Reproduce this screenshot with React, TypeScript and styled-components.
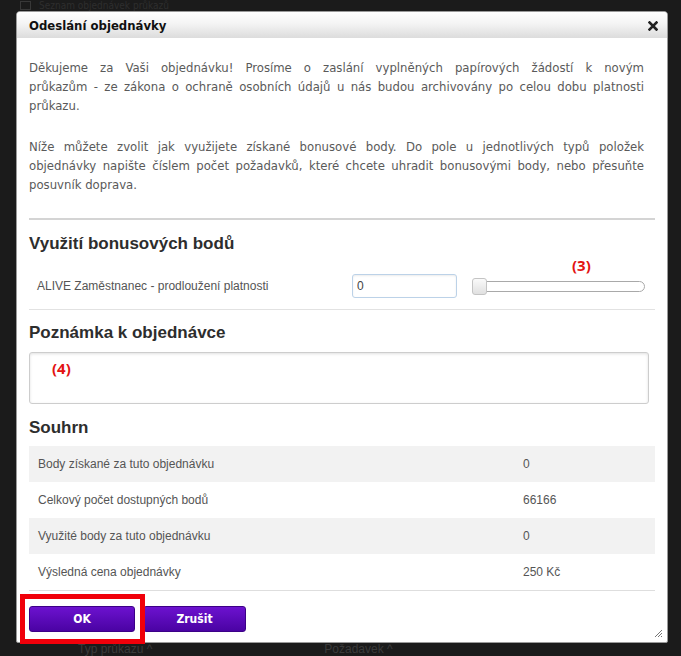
import React from 'react';
import styled, { createGlobalStyle } from 'styled-components';

const GlobalStyle = createGlobalStyle`
  html, body {
    margin: 0;
    padding: 0;
    background: #1b1b1b;
  }
  * {
    box-sizing: border-box;
  }
`;

type SummaryRow = { label: string; value: string };

const summary: SummaryRow[] = [
  { label: 'Body získané za tuto objednávku', value: '0' },
  { label: 'Celkový počet dostupných bodů', value: '66166' },
  { label: 'Využité body za tuto objednávku', value: '0' },
  { label: 'Výsledná cena objednávky', value: '250 Kč' },
];

// the intro text is laid out line by line, as the original dialog wraps it
const thanksLines = [
  'Děkujeme za Vaši objednávku! Prosíme o zaslání vyplněných papírových žádostí k novým',
  'průkazům - ze zákona o ochraně osobních údajů u nás budou archivovány po celou dobu platnosti',
  'průkazu.',
];

const bonusLines = [
  'Níže můžete zvolit jak využijete získané bonusové body. Do pole u jednotlivých typů položek',
  'objednávky napište číslem počet požadavků, které chcete uhradit bonusovými body, nebo přesuňte',
  'posuvník doprava.',
];

const CloseIcon = () => (
  <svg width="10" height="10" viewBox="0 0 10 10">
    <path d="M1.5 1.5 L8.5 8.5 M8.5 1.5 L1.5 8.5" stroke="#222" strokeWidth="2.6" strokeLinecap="square" />
  </svg>
);

const ResizeIcon = () => (
  <svg width="9" height="9" viewBox="0 0 9 9">
    <path d="M8 1 L1 8 M8 4 L4 8 M8 7 L7 8" stroke="#777" strokeWidth="1" />
  </svg>
);

const JustifiedText: React.FC<{ lines: string[]; spaced?: boolean }> = ({ lines, spaced }) => (
  <Paragraph spaced={spaced}>
    {lines.map((line, i) => (
      <Line key={line} last={i === lines.length - 1}>
        {line}
      </Line>
    ))}
  </Paragraph>
);

export default function App() {
  return (
    <>
      <GlobalStyle />
      <Page>
        <BackdropTop>
          <BackdropIcon />
          <BackdropText>Seznam objednávek průkazů</BackdropText>
        </BackdropTop>
        <BackdropBottom>
          <BackdropHeader offset={78}>Typ průkazu ^</BackdropHeader>
          <BackdropHeader offset={172}>Požadavek ^</BackdropHeader>
        </BackdropBottom>

        <Dialog>
          <Header>
            <Title>Odeslání objednávky</Title>
            <CloseButton aria-label="Zavřít">
              <CloseIcon />
            </CloseButton>
          </Header>
          <Body>
            <JustifiedText lines={thanksLines} />
            <JustifiedText lines={bonusLines} spaced />
            <Rule thick />
            <SectionTitle>Využití bonusových bodů</SectionTitle>
            <BonusRow>
              <BonusLabel>ALIVE Zaměstnanec - prodloužení platnosti</BonusLabel>
              <PointsInput defaultValue="0" />
              <SliderWrap>
                <Marker>(3)</Marker>
                <SliderTrack>
                  <SliderHandle />
                </SliderTrack>
              </SliderWrap>
            </BonusRow>
            <Rule />
            <SectionTitle top={13}>Poznámka k objednávce</SectionTitle>
            <NoteBox>
              <Marker inline>(4)</Marker>
            </NoteBox>
            <SectionTitle top={14}>Souhrn</SectionTitle>
            <SummaryTable>
              {summary.map((row, i) => (
                <SummaryLine key={row.label} striped={i % 2 === 0}>
                  <SummaryLabel>{row.label}</SummaryLabel>
                  <SummaryValue>{row.value}</SummaryValue>
                </SummaryLine>
              ))}
            </SummaryTable>
            <Footer>
              <PurpleButton width={106}>OK</PurpleButton>
              <PurpleButton width={103}>Zrušit</PurpleButton>
            </Footer>
          </Body>
          <Highlight />
          <ResizeGrip>
            <ResizeIcon />
          </ResizeGrip>
        </Dialog>
      </Page>
    </>
  );
}

const Page = styled.div`
  position: relative;
  width: 681px;
  height: 656px;
  overflow: hidden;
  background: #1b1b1b;
  display: flex;
  flex-direction: column;
  justify-content: space-between;
`;

const BackdropTop = styled.div`
  display: flex;
  align-items: center;
  gap: 8px;
  height: 11px;
  padding-left: 20px;
`;

const BackdropIcon = styled.div`
  width: 11px;
  height: 9px;
  border: 1px solid #383838;
`;

const BackdropText = styled.span`
  font-family: 'DejaVu Sans Condensed', 'DejaVu Sans', sans-serif;
  font-size: 10px;
  line-height: 11px;
  color: #2e2e2e;
`;

const BackdropBottom = styled.div`
  display: flex;
  align-items: flex-end;
  height: 13px;
`;

const BackdropHeader = styled.span<{ offset: number }>`
  margin-left: ${({ offset }) => offset}px;
  font-family: 'Liberation Sans', Arial, sans-serif;
  font-size: 12px;
  line-height: 13px;
  color: #3a3a3a;
  white-space: nowrap;
`;

const Dialog = styled.div`
  position: absolute;
  left: 16px;
  top: 11px;
  width: 652px;
  height: 632px;
  background: #fff;
  border: 1px solid #9a9a9a;
  border-radius: 4px 4px 2px 2px;
  display: flex;
  flex-direction: column;
`;

const Header = styled.div`
  height: 26px;
  display: flex;
  align-items: center;
  justify-content: space-between;
  padding: 0 9px 0 12px;
  background: linear-gradient(#ffffff 0%, #f4f4f4 45%, #dcdcdc 100%);
  border-radius: 3px 3px 0 0;
`;

const Title = styled.span`
  font-family: 'DejaVu Sans Condensed', 'DejaVu Sans', sans-serif;
  font-weight: bold;
  font-size: 13px;
  color: #111;
  padding-top: 1px;
`;

const CloseButton = styled.button`
  border: none;
  background: none;
  padding: 0;
  display: flex;
  margin-top: 1px;
  cursor: pointer;
`;

const Body = styled.div`
  padding: 20px 12px 0 12px;
  display: flex;
  flex-direction: column;
`;

const Paragraph = styled.p<{ spaced?: boolean }>`
  margin: ${({ spaced }) => (spaced ? '22px' : '0')} 11px 0 0;
  font-family: 'DejaVu Sans Condensed', 'DejaVu Sans', sans-serif;
  font-size: 13px;
  line-height: 19px;
  color: #5a5a5a;
`;

const Line = styled.span<{ last: boolean }>`
  display: block;
  white-space: nowrap;
  text-align: ${({ last }) => (last ? 'left' : 'justify')};
  text-align-last: ${({ last }) => (last ? 'left' : 'justify')};
`;

const Rule = styled.hr<{ thick?: boolean }>`
  margin: ${({ thick }) => (thick ? '24px 0 0' : '11px 0 0')};
  border: none;
  height: ${({ thick }) => (thick ? '2px' : '1px')};
  background: ${({ thick }) => (thick ? '#d4d4d4' : '#e2e2e2')};
`;

const SectionTitle = styled.h3<{ top?: number }>`
  margin: ${({ top }) => top ?? 14}px 0 0;
  font-family: 'Liberation Sans', Arial, sans-serif;
  font-weight: bold;
  font-size: 17px;
  line-height: 20px;
  color: #2d2d2d;
`;

const BonusRow = styled.div`
  margin-top: 20px;
  height: 24px;
  display: flex;
  align-items: center;
`;

const BonusLabel = styled.span`
  width: 323px;
  padding-left: 8px;
  font-family: 'Liberation Sans', Arial, sans-serif;
  font-size: 12px;
  color: #555;
`;

const PointsInput = styled.input`
  width: 105px;
  height: 24px;
  border: 1px solid #bcd2e8;
  border-radius: 3px;
  box-shadow: inset 0 1px 2px rgba(0, 0, 0, 0.08);
  padding: 0 4px;
  font-family: 'Liberation Sans', Arial, sans-serif;
  font-size: 12px;
  color: #444;
  outline: none;
`;

const SliderWrap = styled.div`
  position: relative;
  margin-left: 15px;
  width: 173px;
`;

const Marker = styled.span<{ inline?: boolean }>`
  position: ${({ inline }) => (inline ? 'static' : 'absolute')};
  left: 100px;
  top: -25px;
  font-family: 'Open Sans', 'Liberation Sans', sans-serif;
  font-weight: bold;
  font-size: 15px;
  line-height: 18px;
  color: #e31212;
`;

const SliderTrack = styled.div`
  position: relative;
  height: 11px;
  border: 1px solid #a9a9a9;
  border-radius: 6px;
  background: #fff;
`;

const SliderHandle = styled.div`
  position: absolute;
  left: -1px;
  top: -4px;
  width: 15px;
  height: 17px;
  border: 1px solid #c4c4c4;
  border-radius: 3px;
  background: linear-gradient(#fafafa, #e0e0e0);
`;

const NoteBox = styled.div`
  margin-top: 9px;
  width: 620px;
  height: 52px;
  border: 1px solid #cdcdcd;
  border-radius: 3px;
  box-shadow: inset 0 1px 3px rgba(0, 0, 0, 0.12);
  padding: 6px 22px;
`;

const SummaryTable = styled.div`
  margin-top: 8px;
  border-bottom: 1px solid #dedede;
`;

const SummaryLine = styled.div<{ striped: boolean }>`
  height: 36px;
  display: flex;
  align-items: center;
  padding-left: 9px;
  background: ${({ striped }) => (striped ? '#f2f2f2' : '#fff')};
  font-family: 'Liberation Sans', Arial, sans-serif;
  font-size: 12px;
  color: #555;
`;

const SummaryLabel = styled.span`
  width: 485px;
`;

const SummaryValue = styled.span``;

const Footer = styled.div`
  margin-top: 15px;
  display: flex;
  gap: 8px;
`;

const PurpleButton = styled.button<{ width: number }>`
  width: ${({ width }) => width}px;
  height: 26px;
  border: 1px solid #3c0087;
  border-radius: 3px;
  background: linear-gradient(#6c12cf, #4a03a3);
  color: #fff;
  font-family: 'DejaVu Sans Condensed', 'DejaVu Sans', sans-serif;
  font-weight: bold;
  font-size: 12px;
  cursor: pointer;
`;

const Highlight = styled.div`
  position: absolute;
  left: 3px;
  top: 582px;
  width: 125px;
  height: 50px;
  border: 5px solid #f0000a;
  pointer-events: none;
`;

const ResizeGrip = styled.div`
  position: absolute;
  right: 4px;
  bottom: 4px;
  display: flex;
`;
